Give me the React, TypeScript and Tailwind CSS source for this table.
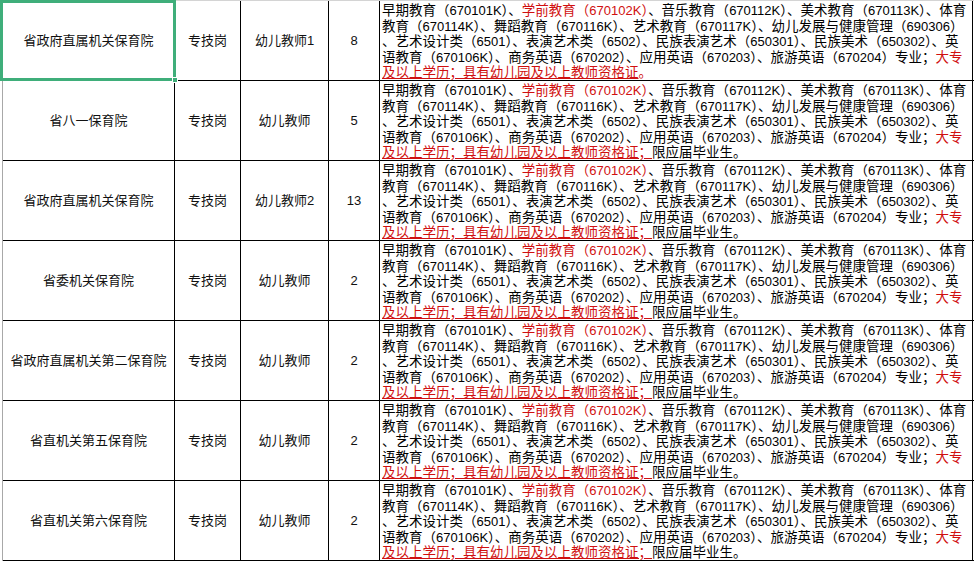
import React from "react";

const rows = [
  { unit: "省政府直属机关保育院", post: "专技岗", name: "幼儿教师1", count: "8", fresh: false },
  { unit: "省八一保育院", post: "专技岗", name: "幼儿教师", count: "5", fresh: true },
  { unit: "省政府直属机关保育院", post: "专技岗", name: "幼儿教师2", count: "13", fresh: true },
  { unit: "省委机关保育院", post: "专技岗", name: "幼儿教师", count: "2", fresh: true },
  { unit: "省政府直属机关第二保育院", post: "专技岗", name: "幼儿教师", count: "2", fresh: true },
  { unit: "省直机关第五保育院", post: "专技岗", name: "幼儿教师", count: "2", fresh: true },
  { unit: "省直机关第六保育院", post: "专技岗", name: "幼儿教师", count: "2", fresh: true },
];

// digits and latin letters come out narrower than the CJK glyphs
const T = ({ s }: { s: string }) => (
  <>
    {s.split(/([0-9A-Z]+)/).map((part, i) =>
      /^[0-9A-Z]+$/.test(part) ? (
        <span key={i} className="text-[13px] leading-none">
          {part}
        </span>
      ) : (
        <React.Fragment key={i}>{part}</React.Fragment>
      )
    )}
  </>
);

const Red = ({ children, line }: { children: React.ReactNode; line?: boolean }) => (
  <span
    className={
      "text-[#d01010]" + (line ? " underline decoration-[#d01010] underline-offset-[1px]" : "")
    }
  >
    {children}
  </span>
);

const Line = ({ children }: { children: React.ReactNode }) => (
  <div className="h-[15.5px] leading-[15.5px]">{children}</div>
);

const Requirement = ({ fresh }: { fresh: boolean }) => (
  <div className="pl-[2px] pt-[2px] text-[13.5px] text-black whitespace-nowrap">
    <Line>
      <T s="早期教育（670101K）、" />
      <Red>
        <T s="学前教育（670102K）" />
      </Red>
      <T s="、音乐教育（670112K）、美术教育（670113K）、体育" />
    </Line>
    <Line>
      <T s="教育（670114K）、舞蹈教育（670116K）、艺术教育（670117K）、幼儿发展与健康管理（690306）" />
    </Line>
    <Line>
      <T s="、艺术设计类（6501）、表演艺术类（6502）、民族表演艺术（650301）、民族美术（650302）、英" />
    </Line>
    <Line>
      <T s="语教育（670106K）、商务英语（670202）、应用英语（670203）、旅游英语（670204）专业；" />
      <Red>大专</Red>
    </Line>
    <Line>
      {fresh ? (
        <>
          <Red line>及以上学历；具有幼儿园及以上教师资格证；</Red>
          限应届毕业生。
        </>
      ) : (
        <>
          <Red line>及以上学历；具有幼儿园及以上教师资格证</Red>
          <Red>。</Red>
        </>
      )}
    </Line>
  </div>
);

export default function App() {
  return (
    <div
      className="relative w-[974px] h-[561px] bg-white overflow-hidden"
      style={{ fontFamily: '"Liberation Sans", "Noto Sans CJK SC", sans-serif' }}
    >
      <div className="ml-[2px] w-[972px] border-l border-t border-l-[#a8a8a8] border-t-[#d4d4d4]">
        {rows.map((r, i) => (
          <div key={i} className="flex h-[80px] border-b border-black">
            <div className="w-[172px] border-r border-black flex items-center justify-center text-[13px] text-[#111]">
              {r.unit}
            </div>
            <div className="w-[66px] border-r border-black flex items-center justify-center text-[13px] text-[#111]">
              {r.post}
            </div>
            <div className="w-[88px] border-r border-black flex items-center justify-center text-[13px] text-[#111]">
              {r.name}
            </div>
            <div className="w-[51px] border-r border-black flex items-center justify-center text-[13px] text-[#111]">
              {r.count}
            </div>
            <div className="w-[593px] border-r border-black overflow-hidden">
              <Requirement fresh={r.fresh} />
            </div>
          </div>
        ))}
      </div>

      {/* selected cell */}
      <div className="absolute left-0 top-0 w-[176px] h-[81px] border-[3px] border-[#3fae7a]" />
      <div className="absolute left-[172px] top-[77px] w-[6px] h-[6px] bg-[#3fae7a] border border-white" />
    </div>
  );
}
